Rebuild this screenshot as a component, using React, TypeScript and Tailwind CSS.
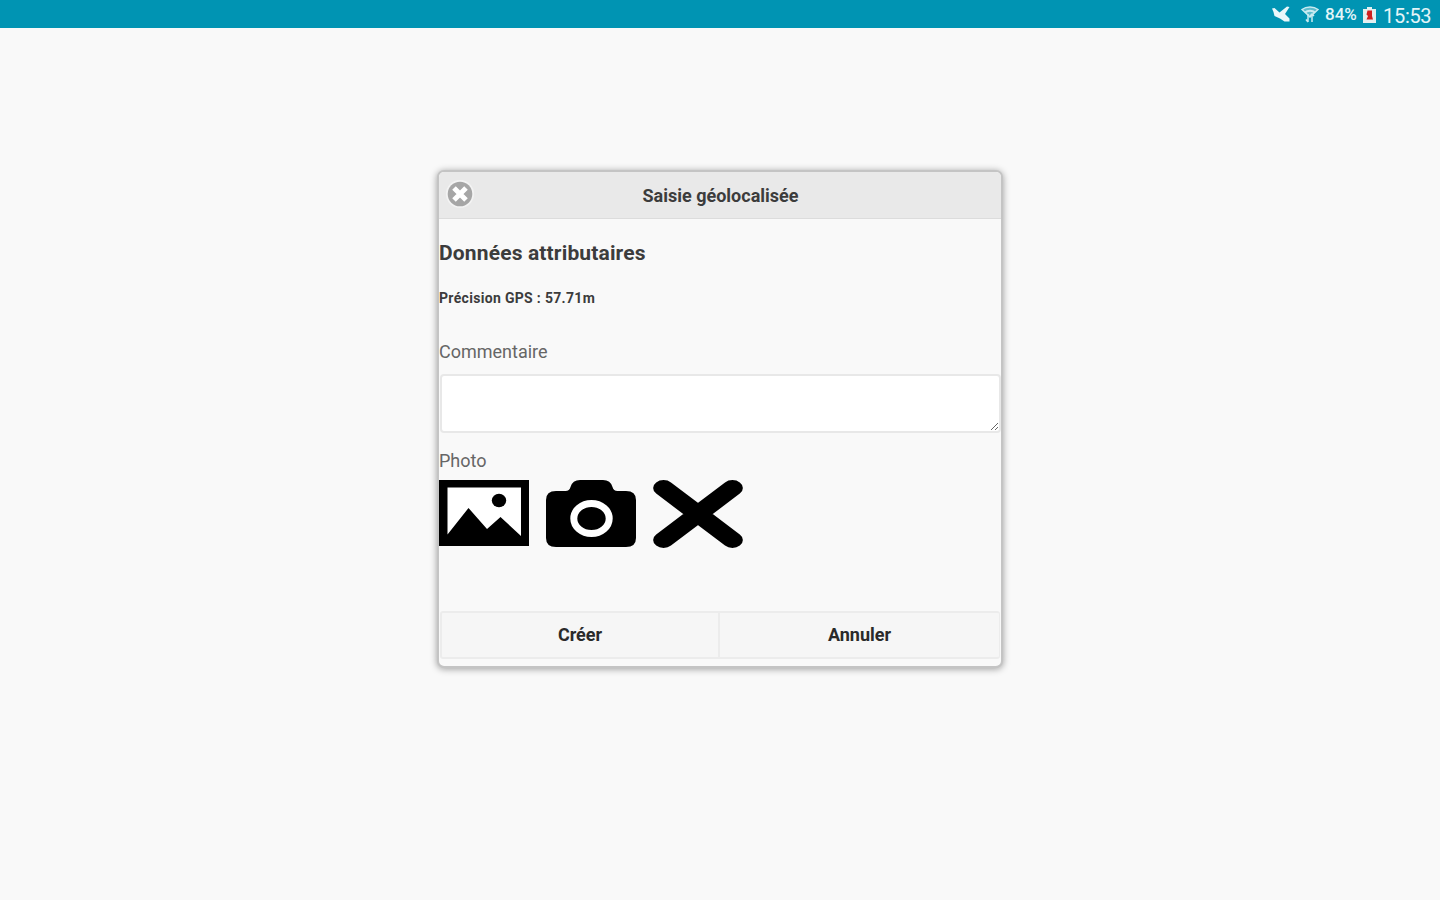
import { useState } from 'react'

const MuteIcon = () => (
  <svg width="20" height="20" viewBox="0 0 20 20" fill="#e9f7fa">
    <path d="M1 4.500 3.500 4l5 4.500L16 2.500l2.500.5-4.500 7 4.500 4.500v3h-5L9 14.500 3.500 12 2.500 8z" />
  </svg>
)

const WifiIcon = () => (
  <svg width="18" height="18" viewBox="0 0 18 18" fill="none" stroke="#c9ebf1">
    <path d="M1 4.500C5.500 1 12.500 1 17 4.500L9 12z" fill="#5dbccd" strokeWidth="1.500" />
    <path d="M4 7.500c2.500-2.500 7.500-2.500 10 0" strokeWidth="2" />
    <path d="M7 9v8M11 9v8M5 14.500l2 2.500M9 11l2-2 2 2" strokeWidth="1.500" />
  </svg>
)

const BatteryIcon = () => (
  <svg width="13" height="16" viewBox="0 0 13 16">
    <path d="M0 2h4V0h5v2h4v14H0z" fill="#e4eff0" />
    <path d="M4.500 3.500H9V9l1 3.500H3.500L5 9 3.500 7.500z" fill="#cf2020" />
  </svg>
)

const ImageIcon = () => (
  <svg width="90" height="66" viewBox="0 0 90 66">
    <path d="M0 0h90v66H0z" />
    <path d="M8.500 7.500v47L29.500 28l18.500 21L61.500 37 82 56V7.500z" fill="#fff" />
    <ellipse cx="60" cy="20.500" rx="7.200" ry="6.700" />
  </svg>
)

const CameraIcon = () => (
  <svg width="90" height="67" viewBox="0 0 90 67">
    <path d="M10 11h9.500q4 0 5-4Q26.500 0 34 0h23q7.500 0 9.500 7 1 4 5 4H80q10 0 10 9v38q0 9-10 9H10Q0 67 0 58V20q0-9 10-9z" />
    <ellipse cx="45.500" cy="38.500" rx="17.700" ry="15" fill="none" stroke="#fff" strokeWidth="7" />
  </svg>
)

const CrossIcon = () => (
  <svg
    width="90"
    height="68"
    viewBox="0 0 68 68"
    preserveAspectRatio="none"
    fill="none"
    stroke="#000"
    strokeWidth="15.800"
    strokeLinecap="round"
  >
    <path d="M8 8 60 60M60 8 8 60" />
  </svg>
)

const CloseIcon = () => (
  <svg width="28" height="28" viewBox="0 0 28 28">
    <circle cx="14" cy="14" r="14" fill="#f3f3f3" />
    <circle cx="14" cy="14" r="12.300" fill="#a6a6a6" />
    <path d="m8 8 12 12M20 8 8 20" stroke="#fff" strokeWidth="5" />
  </svg>
)

function StatusBar() {
  return (
    <div className="flex h-7 items-center justify-end bg-[#0094b3] pr-[8px] text-[#e3f5f8]">
      <MuteIcon />
      <div className="mr-[6px] ml-[10px]">
        <WifiIcon />
      </div>
      <span className="w-[34px] pt-[1px] text-[17px] leading-none font-medium whitespace-nowrap">84%</span>
      <div className="mr-[7px] ml-[4px] pt-[2px]">
        <BatteryIcon />
      </div>
      <span className="w-[49px] pt-[4px] text-[20px] leading-none tracking-[-0.3px] whitespace-nowrap">15:53</span>
    </div>
  )
}

export default function App() {
  const [comment, setComment] = useState('')

  return (
    <div className="h-screen overflow-hidden bg-[#f9f9f9] font-['Roboto','Liberation_Sans',sans-serif] text-[#3c3c3c]">
      <StatusBar />

      <main className="mx-auto mt-[142px] h-[498px] w-[566px] overflow-hidden rounded-[7px] border-2 border-[#c4c4c4] bg-[#f9f9f9] shadow-[0_1px_7px_rgba(0,0,0,0.38)]">
        <header className="grid h-[47px] grid-cols-[60px_1fr_60px] items-center border-b border-[#dcdcdc] bg-[#e9e9e9]">
          <button type="button" aria-label="Fermer" className="mb-[2px] ml-[7px] w-[28px]">
            <CloseIcon />
          </button>
          <h1 className="pl-px text-center text-[18px] font-bold">Saisie géolocalisée</h1>
        </header>

        <h2 className="mt-[21px] text-[21px] leading-[26px] font-bold tracking-[0.15px]">Données attributaires</h2>
        <h3 className="mt-[22px] text-[14px] leading-[20px] font-bold tracking-[0.32px]">Précision GPS : 57.71m</h3>

        <label htmlFor="comment" className="mt-[32px] block text-[18px] leading-[24px] text-[#666]">
          Commentaire
        </label>
        <textarea
          id="comment"
          value={comment}
          onChange={e => setComment(e.target.value)}
          className="mx-px mt-[10px] block h-[59px] w-[561px] resize rounded-[4px] border-2 border-[#e8e8e8] bg-white"
        />

        <div className="mt-[16px] text-[18px] leading-[24px] text-[#666]">Photo</div>
        <div className="mt-[7px] flex h-[68px] items-start gap-[17px]">
          <ImageIcon />
          <CameraIcon />
          <CrossIcon />
        </div>

        <footer className="mx-px mt-[63px] grid h-[48px] grid-cols-2 text-[18px] font-bold text-[#2a2a2a]">
          <button type="button" className="rounded-l-[3px] border-2 border-[#ececec] bg-[#f6f6f6] pb-[2px]">
            Créer
          </button>
          <button type="button" className="rounded-r-[3px] border-y-2 border-r border-[#ececec] bg-[#f6f6f6] pb-[2px]">
            Annuler
          </button>
        </footer>
      </main>
    </div>
  )
}
